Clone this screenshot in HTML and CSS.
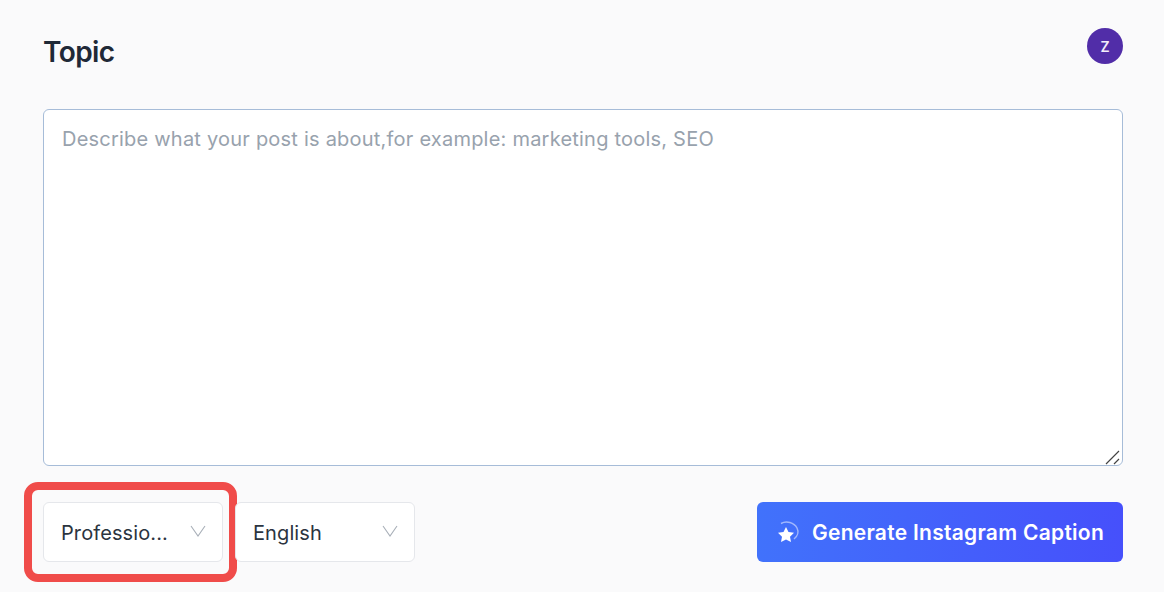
FILE: index.html
```html
<!DOCTYPE html>
<html lang="en">
<head>
<meta charset="utf-8">
<title>Topic</title>
<link rel="stylesheet" href="styles.css">
</head>
<body>
<main class="page">
  <header class="head">
    <h1 class="title">Topic</h1>
    <div class="avatar">Z</div>
  </header>
  <div class="topic-wrap">
    <textarea class="topic" placeholder="Describe what your post is about,for example: marketing tools, SEO"></textarea>
    <svg class="grip" viewBox="0 0 16 16" width="16" height="16"><path d="M1 15L14 2M9 15l5-5" fill="none" stroke="#444" stroke-width="1.2"/></svg>
  </div>
  <div class="controls">
    <div class="selects">
      <div class="select highlighted">
        <span class="select-text">Professio...</span>
        <svg class="chev" viewBox="0 0 16 12" width="16" height="12"><path d="M1 1l7 10 7-10" fill="none" stroke="currentColor" stroke-width="1.1"/></svg>
      </div>
      <div class="select">
        <span class="select-text">English</span>
        <svg class="chev" viewBox="0 0 16 12" width="16" height="12"><path d="M1 1l7 10 7-10" fill="none" stroke="currentColor" stroke-width="1.1"/></svg>
      </div>
    </div>
    <button class="generate" type="button">
      <svg class="spark" viewBox="0 0 24 24" width="24" height="24">
        <path d="M4 3.500C9.500 0.500 17 2.500 20 8c1.800 3.500 1 8-3 11" fill="none" stroke="#fff" stroke-opacity=".5" stroke-width="1.500"/>
        <path d="M9 7l2.500 5 5.500.8-4 3.900 1 5.300-5-2.600L4 22l1-5.300-4-3.900 5.500-.8z" fill="#fff"/>
      </svg>
      <span class="generate-text">Generate Instagram Caption</span>
    </button>
  </div>
</main>
</body>
</html>
```

FILE: styles.css
```css
* { box-sizing: border-box; }
html, body { margin: 0; height: 100%; }
body {
  background: #fafafb;
  font-family: Inter, "Liberation Sans", sans-serif;
  color: #1f2937;
  overflow: hidden;
}
.page {
  padding: 28px 41px 0 43px;
  display: flex;
  flex-direction: column;
}
.head {
  display: flex;
  justify-content: space-between;
  align-items: flex-start;
  height: 81px;
}
.title {
  margin: 0;
  font-size: 28px;
  line-height: 48px;
  font-weight: 600;
  letter-spacing: -0.6px;
  color: #1f2937;
}
.avatar {
  width: 36px;
  height: 36px;
  border-radius: 50%;
  background: #512da8;
  color: #f3eefb;
  font-size: 14px;
  font-weight: 600;
  display: flex;
  align-items: center;
  justify-content: center;
}
.topic-wrap { position: relative; height: 357px; }
.topic {
  display: block;
  width: 100%;
  height: 100%;
  padding: 15px 18px;
  border: 1px solid #a6bcd8;
  border-radius: 6px;
  background: #fff;
  font: 20px/28px Inter, "Liberation Sans", sans-serif;
  letter-spacing: 0.22px;
  outline: none;
  resize: none;
}
.topic::placeholder { color: #98a2ad; opacity: 1; }
.grip {
  position: absolute;
  right: 2px;
  bottom: 1px;
}
.controls {
  margin-top: 36px;
  display: flex;
  justify-content: space-between;
}
.selects { display: flex; gap: 12px; }
.select {
  position: relative;
  width: 180px;
  height: 60px;
  padding: 0 16px 0 17px;
  border: 1px solid #e5e7eb;
  border-radius: 6px;
  background: #fff;
  display: flex;
  align-items: center;
  justify-content: space-between;
  font-size: 20px;
  letter-spacing: 0.1px;
  color: #2b3440;
}
.select-text { margin-top: 2px; }
.chev { color: #a8afb8; margin-top: -2px; }
.highlighted::after {
  content: "";
  position: absolute;
  inset: -21px -15px -21px -20px;
  border: 8px solid #f04c4a;
  border-radius: 14px;
}
.generate {
  width: 366px;
  height: 60px;
  padding: 0 0 0 1px;
  border: 0;
  border-radius: 6px;
  background: linear-gradient(90deg, #4172fb, #4650fb);
  color: #fff;
  font: 600 21px Inter, "Liberation Sans", sans-serif;
  letter-spacing: 0.27px;
  display: flex;
  align-items: center;
  justify-content: center;
  gap: 11px;
}
```
